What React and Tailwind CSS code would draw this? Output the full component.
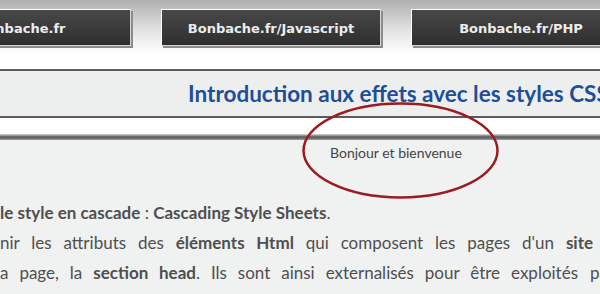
export default function App() {
  const buttons = ["Bonbache.fr", "Bonbache.fr/Javascript", "Bonbache.fr/PHP"];

  return (
    <div className="relative h-[294px] w-[600px] overflow-hidden bg-[#f0f1f1] font-['Lato',sans-serif]">
      {/* bandeau des liens */}
      <div className="h-[69px] bg-[linear-gradient(#b0b0b0,#e4e4e4_45%,#ffffff_78%)] pt-[9px]">
        <div className="ml-[-89px] flex gap-[30px]">
          {buttons.map((b) => (
            <div
              key={b}
              className="flex h-[37px] w-[220px] shrink-0 items-center justify-center border border-[#d6d6d6] border-t-white border-l-white bg-[linear-gradient(#484848,#2e2e2e)] pt-[3px] shadow-[2px_2px_0_#8c8c8c] font-['DejaVu_Sans',sans-serif] text-[13px] font-bold text-[#ececec]"
            >
              {b}
            </div>
          ))}
        </div>
      </div>

      <div className="h-[2px] bg-[#5b5b5b]" />
      <div className="flex h-[45px] items-center whitespace-nowrap bg-[#edeeee] pl-[188px] text-[22.5px] font-bold text-[#1f4e99]">
        Introduction aux effets avec les styles CSS
      </div>
      <div className="h-[2px] bg-[#5b5b5b]" />
      <div className="h-[16px] bg-white" />
      <div className="h-[6px] bg-[linear-gradient(#dcdcdc,#555555_50%,#9a9a9a)]" />

      {/* contenu */}
      <div className="pt-[3px] text-[#4f4f4f]">
        <p className="pl-[330px] text-[14px] leading-[20px] text-[#444]">Bonjour et bienvenue</p>
        <div className="mt-[35px] text-[17px] leading-[30px]">
          <p className="whitespace-nowrap">
            <b>le style en cascade</b> : <b>Cascading Style Sheets</b>.
          </p>
          <p className="w-[593px] text-justify [text-align-last:justify]">
            nir les attributs des <b>éléments Html</b> qui composent les pages d'un <b>site</b>
          </p>
          <div className="flex whitespace-nowrap">
            <p className="w-[578px] shrink-0 text-justify [text-align-last:justify]">
              a page, la <b>section head</b>. Ils sont ainsi externalisés pour être exploités
            </p>
            <span className="ml-[12px]">par</span>
          </div>
        </div>
      </div>

      {/* cercle rouge annoté */}
      <svg className="absolute left-0 top-0" width="600" height="294" viewBox="0 0 600 294" fill="none">
        <ellipse cx="400.5" cy="150.5" rx="97" ry="47" stroke="#9b1b1f" strokeWidth="2.5" />
      </svg>
    </div>
  );
}
